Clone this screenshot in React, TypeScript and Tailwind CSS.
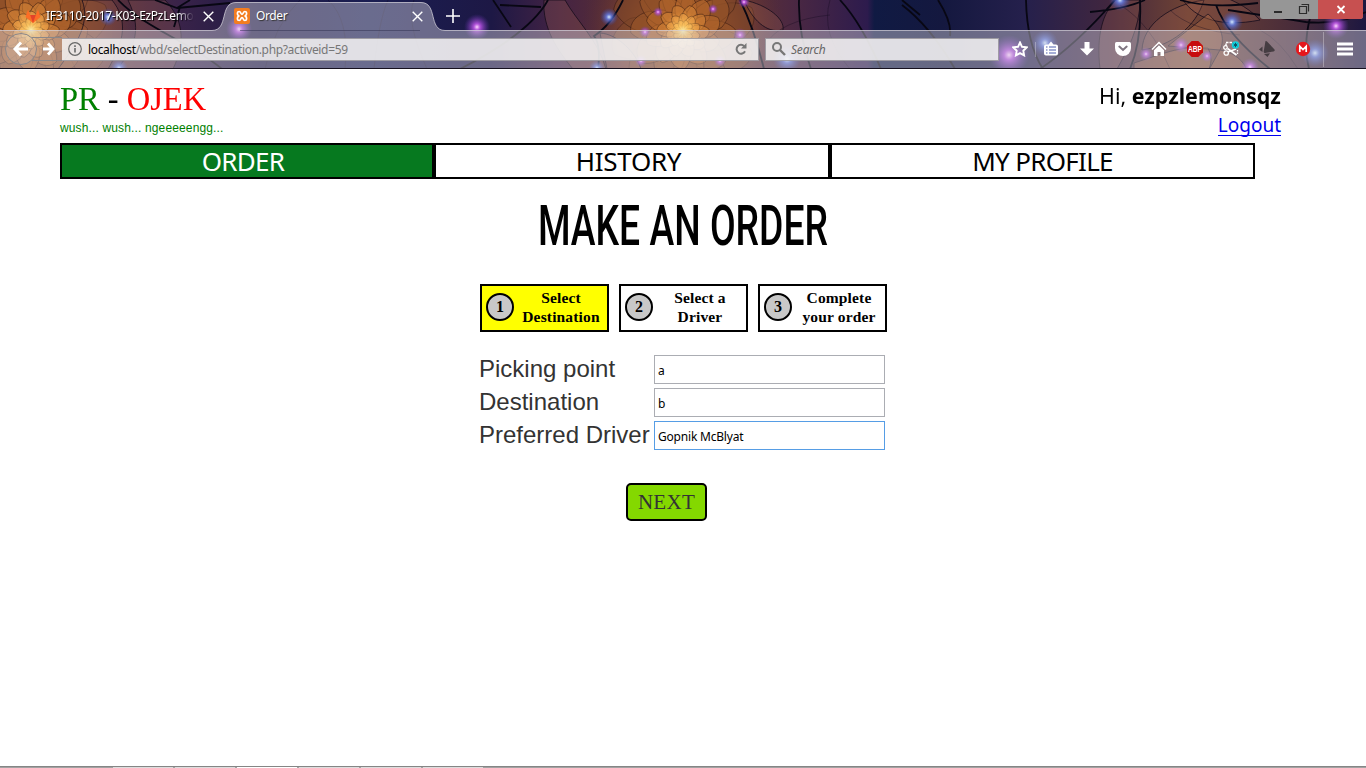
import type { ReactNode } from "react";

const fans = [
  { x: 31, y: 30, r: 84 },
  { x: 683, y: 31, r: 78 },
];

const glows = [
  { x: 239, y: 29, r: 13, c: "violet" },
  { x: 477, y: 27, r: 13, c: "violet" },
  { x: 609, y: 17, r: 9, c: "blue" },
  { x: 108, y: 17, r: 9, c: "blue" },
  { x: 119, y: 68, r: 9, c: "blue" },
  { x: 597, y: 68, r: 8, c: "blue" },
  { x: 787, y: 59, r: 14, c: "blue" },
  { x: 744, y: 2, r: 6, c: "violet" },
  { x: 740, y: 35, r: 7, c: "violet" },
  { x: 658, y: 12, r: 5, c: "violet" },
  { x: 713, y: 9, r: 5, c: "violet" },
  { x: 645, y: 32, r: 6, c: "violet" },
  { x: 720, y: 61, r: 6, c: "violet" },
  { x: 641, y: 61, r: 6, c: "violet" },
  { x: 1009, y: 55, r: 20, c: "violet" },
  { x: 1045, y: 43, r: 13, c: "blue" },
  { x: 1120, y: 0, r: 11, c: "blue" },
  { x: 1232, y: 22, r: 11, c: "blue" },
  { x: 1336, y: 26, r: 13, c: "violet" },
  { x: 1315, y: 53, r: 14, c: "blue" },
  { x: 1181, y: 45, r: 8, c: "violet" },
  { x: 1146, y: 54, r: 7, c: "violet" },
  { x: 1207, y: 56, r: 6, c: "violet" },
  { x: 1250, y: 67, r: 9, c: "violet" },
];

const rings = [
  { s: 1, fill: "#7d4629" },
  { s: 0.72, fill: "#9a5628" },
  { s: 0.52, fill: "#b4682b" },
  { s: 0.36, fill: "#cf8036" },
  { s: 0.24, fill: "#e69c49" },
  { s: 0.15, fill: "#f7bd66" },
];

function Fan({ x, y, r }: { x: number; y: number; r: number }) {
  return (
    <g transform={`translate(${x} ${y})`}>
      <circle r={r * 1.3} fill="url(#ember)" />
      {rings.map((ring, i) => (
        <g key={ring.s} transform={`rotate(${i * 17}) scale(${(ring.s * r) / 100})`}>
          {[0, 36, 72, 108, 144, 180, 216, 252, 288, 324].map((a) => (
            <path
              key={a}
              transform={`rotate(${a})`}
              d="M0 0C25-34 62-44 88-30C96-14 88 4 68 16C44 22 16 16 0 0Z"
              fill={ring.fill}
              fillOpacity=".62"
              stroke="#2a120e"
              strokeOpacity=".6"
              strokeWidth={0.9 / ring.s}
            />
          ))}
        </g>
      ))}
      <circle r="20" fill="url(#core)" />
    </g>
  );
}

function ThemeArt() {
  return (
    <svg className="absolute inset-0 h-full w-full" viewBox="0 0 1366 69" preserveAspectRatio="none" aria-hidden="true">
      <defs>
        <linearGradient id="sky">
          <stop offset="0" stopColor="#6b3a25" />
          <stop offset=".07" stopColor="#59313a" />
          <stop offset=".13" stopColor="#3a2349" />
          <stop offset=".19" stopColor="#1f1a45" />
          <stop offset=".27" stopColor="#1a1e52" />
          <stop offset=".36" stopColor="#1d1845" />
          <stop offset=".41" stopColor="#442343" />
          <stop offset=".5" stopColor="#713b25" />
          <stop offset=".58" stopColor="#4b2842" />
          <stop offset=".635" stopColor="#2d1b4d" />
          <stop offset=".64" stopColor="#101a43" />
          <stop offset=".69" stopColor="#14183f" />
          <stop offset=".75" stopColor="#25204c" />
          <stop offset=".81" stopColor="#40263f" />
          <stop offset=".87" stopColor="#704334" />
          <stop offset=".95" stopColor="#472b3a" />
          <stop offset="1" stopColor="#1d1740" />
        </linearGradient>
        <radialGradient id="ember">
          <stop stopColor="#c9742f" />
          <stop offset=".5" stopColor="#96502b" stopOpacity=".75" />
          <stop offset="1" stopColor="#552d32" stopOpacity="0" />
        </radialGradient>
        <radialGradient id="core">
          <stop stopColor="#fff3ae" />
          <stop offset=".3" stopColor="#ffc65d" stopOpacity=".75" />
          <stop offset="1" stopColor="#ef983b" stopOpacity="0" />
        </radialGradient>
        <radialGradient id="violet">
          <stop stopColor="#ffd7ff" />
          <stop offset=".25" stopColor="#c659f0" stopOpacity=".85" />
          <stop offset="1" stopColor="#6632b4" stopOpacity="0" />
        </radialGradient>
        <radialGradient id="blue">
          <stop stopColor="#d4eaff" />
          <stop offset=".3" stopColor="#6481ed" stopOpacity=".8" />
          <stop offset="1" stopColor="#3448ae" stopOpacity="0" />
        </radialGradient>
      </defs>
      <rect width="1366" height="69" fill="url(#sky)" />
      {fans.map((f) => (
        <Fan key={f.x} {...f} />
      ))}
      <g fill="#9b5e50" fillOpacity=".28" stroke="#170d1c" strokeOpacity=".8">
        <path d="M82 0C92 25 72 50 58 69H108C125 40 128 20 112 0Z" />
        <path d="M128 0C145 35 130 50 118 69H173C187 40 182 18 165 0Z" />
        <path d="M544 0C542 28 558 51 573 69H606C598 40 576 20 565 0Z" />
        <path d="M600 33C618 34 636 53 641 69H607Z" />
        <path d="M744 0C768 5 785 19 783 30C766 34 752 19 744 0Z" />
        <path d="M1100 69C1096 35 1103 12 1116 0H1140C1140 28 1127 51 1117 69Z" />
        <path d="M1142 50C1143 24 1170 5 1204 0C1196 27 1171 46 1142 50Z" />
        <path d="M1183 0C1195 18 1220 28 1260 20C1245 4 1230 0 1220-5Z" />
      </g>
      <g fill="#c4764a" fillOpacity=".3" stroke="#170d1c" strokeOpacity=".7">
        <path d="M1134 63C1160 55 1180 45 1208 48C1214 60 1210 69 1205 75H1134Z" />
        <path d="M1168 46C1180 36 1196 24 1208 14C1220 24 1226 38 1220 50Z" />
        <path d="M1220 50C1232 52 1246 60 1248 75H1206Z" />
      </g>
      <g fill="none" stroke="#080713" strokeWidth="1.8">
        <path d="M118 0C145 28 190 42 222 69M155 0L177 8L190 0M177 8L230 3M180 7L174 27" />
        <path d="M548 0Q530 33 460 69M493 0L511 27M500 5L541 7M623 0Q611 25 594 36Q601 44 598 69" />
        <path d="M740 0Q754 28 764 69M799 0Q798 33 811 69M840 0Q862 24 881 69M902 0L920 15" />
        <path d="M902 5Q930 26 955 69M938 0Q952 22 950 36M1026 0Q1027 45 1043 69" />
        <path d="M1115 0Q1077 44 1040 69M1090 12Q1125 9 1145 0M1180 0Q1210 9 1258 3M1216 5Q1226 34 1270 69M1310 18Q1303 45 1309 69M1228 10L1306 22M1306 22Q1340 25 1366 12M1140 0Q1142 40 1130 69" />
      </g>
      <g fill="none" stroke="#10091e" strokeOpacity=".5" strokeWidth=".7">
        <path d="M265 69Q274 25 300 0M345 69Q350 20 328 0M374 69Q379 20 388 0M427 69Q405 20 414 0M830 0Q820 34 850 69M765 45Q780 20 830 15M1120 5Q1150 23 1170 69M1260 30Q1280 40 1298 69M1170 10Q1190 30 1240 35" />
      </g>
      {glows.map((g) => (
        <circle key={`${g.x}-${g.y}`} cx={g.x} cy={g.y} r={g.r} fill={`url(#${g.c})`} />
      ))}
      <path
        d="M0 30.5H212C229 30.5 219 2.5 236 2.5H421C438 2.5 428 30.5 445 30.5H1366V69H0Z"
        fill="#d6d3df"
        fillOpacity=".43"
      />
      <path
        d="M0 30.5H212C229 30.5 219 2.5 236 2.5H421C438 2.5 428 30.5 445 30.5H1366"
        fill="none"
        stroke="#d5d3dc"
        strokeOpacity=".75"
      />
      <path d="M240 30.5H420" stroke="#303050" strokeOpacity=".5" />
      <path d="M1035.500 42V57M1323.500 32V67" stroke="#fff" strokeOpacity=".3" />
      <rect y="68" width="1366" height="1" fill="#16111f" />
    </svg>
  );
}

function Cross() {
  return (
    <svg className="h-[11px] w-[11px] shrink-0" viewBox="0 0 11 11" stroke="#fff" strokeWidth="1.4">
      <path d="M.7.7l9.6 9.6M10.3.7L.7 10.3" />
    </svg>
  );
}

function TabStrip() {
  return (
    <div className="flex h-[30px] w-full items-start text-[12px] text-white">
      <div className="flex h-[30px] w-[225px] items-center pt-[2px]">
        <svg className="ml-[25px] h-4 w-4 shrink-0" viewBox="0 0 16 16">
          <path d="M8 15L.5 9 3 1.5 5.2 7h5.6L13 1.5 15.5 9z" fill="#fc6d26" />
          <path d="M8 15L5.2 7h5.6z" fill="#e24329" />
        </svg>
        <span className="ml-[5px] w-[148px] whitespace-nowrap tracking-[-0.3px] [mask-image:linear-gradient(to_right,black_88%,transparent)] [text-shadow:1px_1px_1px_#000]">
          IF3110-2017-K03-EzPzLemon
        </span>
        <span className="ml-[9px]"><Cross /></span>
      </div>
      <div className="flex h-[30px] w-[198px] items-center pt-[2px]">
        <svg className="ml-[9px] h-4 w-4 shrink-0" viewBox="0 0 16 16">
          <rect width="16" height="16" rx="2" fill="#f37d20" />
          <path
            d="M5.200 3.500C3 3.500 2.700 6.500 4.700 8 2.700 9.500 3 12.500 5.200 12.500 7 12.500 6.500 9.700 8 9.700s1 2.800 2.800 2.800c2.200 0 2.500-3 .5-4.500 2-1.500 1.700-4.500-.5-4.500C9 3.500 9.500 6.300 8 6.300S7 3.500 5.200 3.500z"
            fill="none"
            stroke="#fff"
            strokeWidth="1.700"
          />
        </svg>
        <span className="ml-[6px] tracking-[-0.4px] [text-shadow:1px_1px_1px_#333]">Order</span>
        <span className="ml-auto"><Cross /></span>
      </div>
      <svg className="mt-[9px] ml-[23px] h-[14px] w-[14px]" viewBox="0 0 14 14" stroke="#fff" strokeWidth="1.6">
        <path d="M7 0v14M0 7h14" />
      </svg>
      <div className="mr-[3px] ml-auto flex h-[19px] w-[103px] overflow-hidden rounded-b-[3px] bg-[#969696]">
        <svg className="h-[19px] w-[58px]" viewBox="0 0 58 19" fill="none" stroke="#2b2b2b">
          <path d="M14 12h8" strokeWidth="2" />
          <path d="M39.500 6.500h7v7h-7zM41.500 4.500h7v7" strokeWidth="1.200" />
        </svg>
        <svg className="h-[19px] w-[45px] bg-[#c75050]" viewBox="0 0 45 19" stroke="#fff" strokeWidth="1.800">
          <path d="M19.500 6l7 7M26.500 6l-7 7" />
        </svg>
      </div>
    </div>
  );
}

function Tool({ children }: { children: ReactNode }) {
  return (
    <svg className="h-4 w-4 shrink-0" viewBox="0 0 16 16" fill="none">
      {children}
    </svg>
  );
}

function Toolbar() {
  return (
    <div className="flex h-[38px] items-center">
      <svg className="h-[38px] w-[62px] shrink-0" viewBox="0 0 62 38" fill="none">
        <circle cx="21" cy="19" r="15.500" fill="#fff" fillOpacity=".12" stroke="#8a8789" />
        <path d="M32 7.500H62M32 30.500H62" stroke="#8a8789" />
        <path d="M21 12.500L15 19l6 6.500M15.500 19H28" stroke="#fff" strokeWidth="3" />
        <path d="M48 13.500l5 5.500-5 5.500M52.500 19H43" stroke="#fff" strokeWidth="2.800" />
      </svg>
      <div className="flex h-[23px] w-[697px] shrink-0 items-center border border-l-0 border-[#706c77]/60 bg-[#f6f4f4]/85 text-[12px]">
        <svg className="ml-[6px] h-[14px] w-[14px]" viewBox="0 0 14 14" fill="none" stroke="#686868">
          <circle cx="7" cy="7" r="6.300" strokeWidth="1.200" />
          <path d="M7 6v4.500M7 3.300v1.600" strokeWidth="1.600" />
        </svg>
        <span className="ml-[6px] pt-px tracking-[-0.34px] text-[#777]">
          <span className="text-black">localhost</span>/wbd/selectDestination.php?activeid=59
        </span>
        <svg className="mr-[11px] ml-auto h-3 w-3" viewBox="0 0 12 12" fill="none" stroke="#777" strokeWidth="2">
          <path d="M9.200 3.200A4.400 4.400 0 1 0 10 8.200" />
          <path d="M11.500 0v5.500H6z" fill="#777" stroke="none" />
        </svg>
      </div>
      <div className="ml-[6px] flex h-[23px] w-[234px] shrink-0 items-center border border-[#706c77]/60 bg-[#f6f4f4]/85">
        <svg className="ml-[6px] h-[14px] w-[14px]" viewBox="0 0 14 14" fill="none" stroke="#777">
          <circle cx="5" cy="5" r="4" strokeWidth="2" />
          <path d="M8 8l5 5" strokeWidth="2.400" />
        </svg>
        <span className="ml-[5px] pt-px text-[12px] tracking-[-0.2px] text-[#666] italic">Search</span>
      </div>
      <div className="ml-[13px] flex shrink-0 items-center gap-5">
        <Tool>
          <path d="M8 1.500l2 4.300 4.700.6-3.400 3.300.8 4.700L8 12.100l-4.100 2.300.8-4.700L1.300 6.400 6 5.800z" stroke="#fff" strokeWidth="1.900" />
        </Tool>
        <div className="-ml-[5px]">
          <Tool>
            <path d="M3 3.500h2.500L8 .500l2.500 3H13A2 2 0 0 1 15 5.500V12.500A2 2 0 0 1 13 14.500H3A2 2 0 0 1 1 12.500V5.500A2 2 0 0 1 3 3.500z" fill="#fff" />
            <path d="M3 6h1.500M6 6h7M3 9h1.500M6 9h7M3 12h1.500M6 12h7" stroke="#8995c9" strokeWidth="1.300" />
          </Tool>
        </div>
        <Tool>
          <path d="M5.500 1h5v6.500H15l-7 7-7-7h4.500z" fill="#fff" />
        </Tool>
        <Tool>
          <path d="M1.500 1h13Q16 1 16 2.500V7a8 8 0 0 1-16 0V2.500Q0 1 1.500 1z" fill="#fff" />
          <path d="M4.300 5.600L8 9l3.700-3.400" stroke="#807681" strokeWidth="2" strokeLinecap="round" />
        </Tool>
        <Tool>
          <path d="M1 8.500l7-7 7 7" stroke="#fff" strokeWidth="1.500" />
          <path d="M3 9.200l5-5 5 5V15H9.500v-4h-3v4H3z" fill="#fff" />
        </Tool>
        <Tool>
          <path d="M4.700 0h6.600L16 4.700v6.600L11.300 16H4.700L0 11.300V4.700z" fill="#c70d0d" />
          <text x="8" y="11" textAnchor="middle" textLength="14" lengthAdjust="spacingAndGlyphs" className="fill-white font-['Liberation_Sans',sans-serif] text-[8.500px] font-bold">ABP</text>
        </Tool>
        <Tool>
          <path d="M3 5V1.500h7" stroke="#fff" strokeWidth="1.500" strokeDasharray="2.500 1" />
          <path d="M4.500 7.500l9 6.500M5 11l8-3" stroke="#fff" strokeWidth="1.800" />
          <path d="M14.500 9v5" stroke="#fff" strokeWidth="1.300" strokeDasharray="1.500 1" />
          <circle cx="2.500" cy="6.500" r="1.800" stroke="#fff" strokeWidth="1.300" />
          <circle cx="3.200" cy="12" r="2.200" stroke="#fff" strokeWidth="1.300" />
          <circle cx="12.500" cy="4" r="3.700" fill="#13d3de" />
          <path d="M12.500 1.800v4.400M10.600 2.900l3.800 2.200M14.400 2.900l-3.800 2.200" stroke="#0a5265" strokeWidth="1" />
        </Tool>
        <Tool>
          <path d="M6.500 0Q8 0 8.500 1L15.500 8.500Q16.300 10 14.500 10.500L6 12Q4.500 12 4.700 10.500zM0 8.500l3.500-3v5.500zM5 13l6-.8-2.500 3.800z" fill="#453d42" />
        </Tool>
        <Tool>
          <circle cx="8" cy="8" r="7.200" fill="#e5171c" />
          <path d="M4.800 11V5.300L8 8.500l3.200-3.200V11" stroke="#fff" strokeWidth="1.700" />
        </Tool>
        <div className="ml-[6px]">
          <Tool>
            <path d="M0 3h16M0 8h16M0 13h16" stroke="#fff" strokeWidth="3" strokeLinejoin="round" />
          </Tool>
        </div>
      </div>
    </div>
  );
}

const steps = [
  { n: 1, lines: ["Select", "Destination"], box: "bg-[#ffff00]" },
  { n: 2, lines: ["Select a", "Driver"], box: "bg-white" },
  { n: 3, lines: ["Complete", "your order"], box: "bg-white" },
];

const fields = [
  { label: "Picking point", value: "a", border: "border-[#abadb3]" },
  { label: "Destination", value: "b", border: "border-[#abadb3]" },
  { label: "Preferred Driver", value: "Gopnik McBlyat", border: "border-[#569de5]" },
];

export default function App() {
  return (
    <div className="flex h-[768px] w-[1366px] flex-col overflow-hidden bg-white font-['Noto_Sans',sans-serif] text-black">
      <header className="relative h-[69px] shrink-0 overflow-hidden">
        <ThemeArt />
        <div className="relative">
          <TabStrip />
          <Toolbar />
        </div>
      </header>

      <main className="flex grow flex-col">
        <div className="flex h-[74px] justify-between pr-[85px] pl-[60px]">
          <div className="pt-[9px]">
            <div className="h-[42px] origin-left scale-x-[.955] font-['Liberation_Serif',serif] text-[34px] leading-[41px] whitespace-nowrap">
              <span className="text-[#008000]">PR</span> - <span className="text-[#ff0000]">OJEK</span>
            </div>
            <div className="font-['Liberation_Sans',sans-serif] text-[12px] leading-[16px] tracking-[.14px] text-[#008000]">
              wush... wush... ngeeeeengg...
            </div>
          </div>
          <div className="flex flex-col items-end pt-[11px]">
            <div className="origin-right scale-x-[.973] text-[22px] leading-[30px]">
              Hi, <b>ezpzlemonsqz</b>
            </div>
            <div className="mt-[6px] h-[20px] border-b border-[#0000ee] text-[19px] leading-[19px] text-[#0000ee]">
              Logout
            </div>
          </div>
        </div>

        <nav className="ml-[60px] flex h-9 w-[1195px] text-center text-[26px] leading-[33px]">
          <div className="w-[374px] border-2 border-black bg-[#06791f] pr-[8px] tracking-[-0.7px] text-white">ORDER</div>
          <div className="w-[396px] border-2 border-black pr-[7px] tracking-[-0.3px]">HISTORY</div>
          <div className="w-[425px] border-2 border-black tracking-[-0.7px]">MY PROFILE</div>
        </nav>

        <h1 className="mt-[12px] flex h-[70px] justify-center font-['Roboto',sans-serif] text-[55px] leading-[70px] font-medium whitespace-nowrap">
          <span className="scale-x-[.678]">MAKE AN ORDER</span>
        </h1>

        <section className="mt-[23px] ml-[480px] flex gap-[10px]">
          {steps.map((s) => (
            <div key={s.n} className={`flex h-12 w-[129px] border-2 border-black font-['Liberation_Serif',serif] text-[16px] font-bold ${s.box}`}>
              <div className="mt-[7px] ml-1 flex h-7 w-7 shrink-0 items-center justify-center rounded-full border-2 border-black bg-[#c8c8c8]">
                {s.n}
              </div>
              <div className="mt-[2px] mr-[5px] ml-[6px] grow text-center text-[15.500px] leading-[19px] tracking-[.15px] whitespace-nowrap">
                {s.lines[0]}
                <br />
                {s.lines[1]}
              </div>
            </div>
          ))}
        </section>

        <section className="mt-[23px] ml-[479px] flex flex-col gap-1">
          {fields.map((f) => (
            <label key={f.label} className="flex h-[29px]">
              <span className="w-[175px] shrink-0 font-['Liberation_Sans',sans-serif] text-[24px] leading-[28px] whitespace-nowrap text-[#333]">
                {f.label}
              </span>
              <input readOnly defaultValue={f.value} className={`h-[29px] w-[231px] border bg-white px-[3px] pt-[2px] text-[12px] tracking-[-0.2px] outline-none ${f.border}`} />
            </label>
          ))}
        </section>

        <button className="mt-[33px] ml-[626px] h-[38px] w-[81px] rounded-[5px] border-2 border-black bg-[#84d800] font-['Liberation_Serif',serif] text-[21px] leading-[32px] tracking-[.3px] text-[#333]">
          NEXT
        </button>

        <footer className="mt-auto flex h-[2px] gap-[2px] border-t border-[#858585] bg-[#a2a2a2] pl-[113px]">
          <i className="h-px w-[60px] bg-[#ddd]" />
          <i className="h-px w-[60px] bg-[#ddd]" />
          <i className="h-px w-[60px] bg-white" />
          <i className="h-px w-[60px] bg-[#ddd]" />
          <i className="h-px w-[60px] bg-[#ddd]" />
          <i className="h-px w-[60px] bg-[#ddd]" />
        </footer>
      </main>
    </div>
  );
}
